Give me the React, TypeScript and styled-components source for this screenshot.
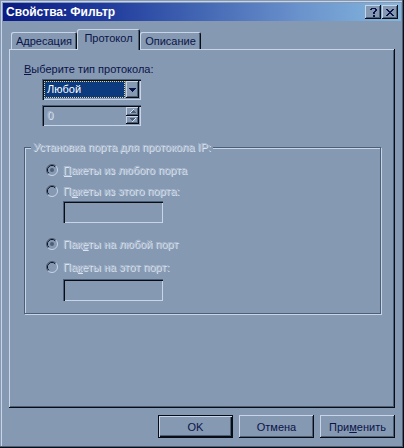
import React, { ReactElement } from "react";
import styled, { createGlobalStyle, css } from "styled-components";

const colors = {
  face: "#8599b3",
  hi: "#c8d5e8",
  shadow: "#4d5e77",
  dark: "#080c14",
  text: "#0b1448",
  dim: "#a9b7cb",
  dimHi: "#dbe4f0",
  select: "#0b3a7e",
};

const raised = css`
  box-shadow: inset -1px -1px 0 ${colors.dark}, inset 1px 1px 0 ${colors.hi},
    inset -2px -2px 0 ${colors.shadow};
`;

const sunken = css`
  box-shadow: inset 1px 1px 0 ${colors.shadow}, inset 2px 2px 0 ${colors.dark},
    inset -1px -1px 0 ${colors.hi};
`;

const GlobalStyle = createGlobalStyle`
  html, body {
    margin: 0;
    padding: 0;
    background: ${colors.face};
  }
  #root {
    width: 404px;
    height: 448px;
  }
`;

const Window = styled.div`
  width: 404px;
  height: 448px;
  box-sizing: border-box;
  padding: 3px;
  display: flex;
  flex-direction: column;
  background: ${colors.face};
  box-shadow: inset -1px -1px 0 ${colors.dark}, inset -2px -2px 0 ${colors.shadow},
    inset 1px 1px 0 ${colors.face}, inset 2px 2px 0 ${colors.hi};
  font-family: "Liberation Sans", Arial, sans-serif;
  font-size: 11px;
  color: ${colors.text};
`;

const TitleBar = styled.div`
  height: 18px;
  display: flex;
  align-items: center;
  padding: 0 3px 0 3px;
  background: linear-gradient(
    to right,
    #0b1c84 0%,
    #1f3a9c 25%,
    #4467b4 50%,
    #6b93cc 75%,
    #84b7df 100%
  );
`;

const Caption = styled.div`
  flex: 1;
  color: #ffffff;
  font-weight: bold;
  font-size: 12px;
  line-height: 18px;
  white-space: nowrap;
`;

const CaptionButtons = styled.div`
  display: flex;
  gap: 1px;
`;

const CaptionButton = styled.div`
  width: 16px;
  height: 14px;
  display: flex;
  align-items: center;
  justify-content: center;
  background: ${colors.face};
  ${raised};
`;

const Body = styled.div`
  display: flex;
  flex-direction: column;
  padding: 0 6px;
  margin-top: 8px;
`;

const TabStrip = styled.div`
  display: flex;
  align-items: flex-end;
  height: 20px;
  padding-left: 2px;
  position: relative;
  z-index: 1;
`;

const Tab = styled.div<{ $active?: boolean; $width: number }>`
  width: ${(p) => p.$width}px;
  height: ${(p) => (p.$active ? 21 : 17)}px;
  margin-bottom: ${(p) => (p.$active ? -1 : 0)}px;
  padding-bottom: ${(p) => (p.$active ? 3 : 0)}px;
  box-sizing: border-box;
  display: flex;
  align-items: center;
  justify-content: center;
  background: ${colors.face};
  border-radius: 2px 2px 0 0;
  box-shadow: inset 1px 1px 0 ${colors.hi}, inset -1px 0 0 ${colors.dark},
    inset -2px 0 0 ${colors.shadow};
  white-space: nowrap;
`;

const Panel = styled.div`
  height: 359px;
  box-sizing: border-box;
  padding: 13px 0 0 15px;
  display: flex;
  flex-direction: column;
  align-items: flex-start;
  ${raised};
`;

const FieldLabel = styled.div`
  line-height: 14px;
`;

const Combo = styled.div`
  width: 99px;
  height: 21px;
  margin: 3px 0 0 18px;
  padding: 2px;
  box-sizing: border-box;
  display: flex;
  ${sunken};
`;

const ComboValue = styled.div`
  flex: 1;
  margin: 0 1px 0 0;
  padding-left: 3px;
  line-height: 17px;
  color: #ffffff;
  background: ${colors.select};
  outline: 1px dotted #e8d27a;
  outline-offset: -1px;
`;

const ArrowButton = styled.div`
  width: 13px;
  display: flex;
  align-items: center;
  justify-content: center;
  ${raised};
`;

const Spinner = styled(Combo)`
  margin-top: 5px;
`;

const SpinField = styled.div`
  flex: 1;
  padding-left: 3px;
  line-height: 17px;
`;

const SpinButtons = styled.div`
  width: 13px;
  display: flex;
  flex-direction: column;
`;

const SpinButton = styled.div`
  flex: 1;
  display: flex;
  align-items: center;
  justify-content: center;
  ${raised};
`;

const Dim = styled.span`
  color: ${colors.dim};
  text-shadow: 1px 1px 0 ${colors.dimHi};
`;

const Group = styled.fieldset`
  width: 357px;
  margin: 14px 0 0 0;
  padding: 7px 0 12px 0;
  box-sizing: border-box;
  border: 1px solid ${colors.shadow};
  box-shadow: inset 1px 1px 0 ${colors.hi}, 1px 1px 0 ${colors.hi};
`;

const Legend = styled.legend`
  margin-left: 6px;
  padding: 0 2px;
  line-height: 14px;
  background: ${colors.face};
`;

const GroupBody = styled.div`
  display: flex;
  flex-direction: column;
  align-items: flex-start;
  padding-left: 21px;
`;

const RadioRow = styled.div<{ $top: number }>`
  height: 18px;
  margin-top: ${(p) => p.$top}px;
  display: flex;
  align-items: center;
  gap: 5px;
`;

const TextBox = styled.div<{ $top: number }>`
  width: 100px;
  height: 22px;
  margin: ${(p) => p.$top}px 0 0 17px;
  box-sizing: border-box;
  ${sunken};
`;

const Footer = styled.div`
  display: flex;
  justify-content: flex-end;
  gap: 6px;
  padding: 0 6px;
  margin-top: 7px;
`;

const PushButton = styled.div<{ $default?: boolean }>`
  width: 75px;
  height: 23px;
  box-sizing: border-box;
  display: flex;
  align-items: center;
  justify-content: center;
  ${(p) =>
    p.$default
      ? css`
          box-shadow: inset 0 0 0 1px ${colors.dark}, inset 2px 2px 0 ${colors.hi},
            inset -2px -2px 0 ${colors.dark}, inset -3px -3px 0 ${colors.shadow};
        `
      : raised};
`;

const HelpGlyph = () => (
  <svg width="7" height="9" viewBox="0 0 7 9" shapeRendering="crispEdges" fill={colors.text}>
    <rect x="1" y="0" width="5" height="1" />
    <rect x="0" y="1" width="2" height="1" />
    <rect x="5" y="1" width="2" height="2" />
    <rect x="4" y="3" width="2" height="1" />
    <rect x="3" y="4" width="2" height="2" />
    <rect x="3" y="7" width="2" height="2" />
  </svg>
);

const CloseGlyph = () => (
  <svg width="8" height="7" viewBox="0 0 8 7" shapeRendering="crispEdges">
    <path
      d="M0 0h2v1h1v1h2v-1h1v-1h2v1h-1v1h-1v1h-1v1h1v1h1v1h1v1h-2v-1h-1v-1h-2v1h-1v1h-2v-1h1v-1h1v-1h1v-1h-1v-1h-1v-1h-1z"
      fill={colors.text}
    />
  </svg>
);

const DownArrow = ({ color }: { color: string }) => (
  <svg width="7" height="4" viewBox="0 0 7 4" shapeRendering="crispEdges">
    <path d="M0 0h7v1h-1v1h-1v1h-1v1h-1v-1h-1v-1h-1v-1h-1z" fill={color} />
  </svg>
);

const DimArrow = ({ up }: { up?: boolean }) => (
  <svg
    width="6"
    height="4"
    viewBox="0 0 6 4"
    shapeRendering="crispEdges"
    style={{ transform: up ? "rotate(180deg)" : undefined }}
  >
    <path d="M0 0h5v1h-1v1h-1v1h-1v-1h-1v-1h-1z" fill={colors.shadow} />
    <path d="M5 0h1v1h-1v1h-1v1h-1v1h-1v-1h1v-1h1v-1h1z" fill={colors.dimHi} />
  </svg>
);

const Radio = ({ checked }: { checked?: boolean }) => (
  <svg width="12" height="12" viewBox="0 0 12 12">
    <path d="M2.1 9.9A5.5 5.5 0 0 1 9.9 2.1" stroke={colors.shadow} fill="none" />
    <path d="M9.9 2.1A5.5 5.5 0 0 1 2.1 9.9" stroke={colors.hi} fill="none" />
    <path d="M2.8 9.2A4.5 4.5 0 0 1 9.2 2.8" stroke={colors.dark} fill="none" />
    <circle cx="6" cy="6" r="3.8" fill={colors.face} />
    {checked && <circle cx="6" cy="6" r="2" fill={colors.shadow} />}
  </svg>
);

const tabs = [
  { label: "Адресация", width: 66 },
  { label: "Протокол", width: 63, active: true },
  { label: "Описание", width: 61 },
];

const App = (): ReactElement => (
  <>
    <GlobalStyle />
    <Window>
      <TitleBar>
        <Caption>Свойства: Фильтр</Caption>
        <CaptionButtons>
          <CaptionButton>
            <HelpGlyph />
          </CaptionButton>
          <CaptionButton>
            <CloseGlyph />
          </CaptionButton>
        </CaptionButtons>
      </TitleBar>
      <Body>
        <TabStrip>
          {tabs.map((tab) => (
            <Tab key={tab.label} $active={tab.active} $width={tab.width}>
              {tab.label}
            </Tab>
          ))}
        </TabStrip>
        <Panel>
          <FieldLabel>
            <u>В</u>ыберите тип протокола:
          </FieldLabel>
          <Combo>
            <ComboValue>Любой</ComboValue>
            <ArrowButton>
              <DownArrow color={colors.text} />
            </ArrowButton>
          </Combo>
          <Spinner>
            <SpinField>
              <Dim>0</Dim>
            </SpinField>
            <SpinButtons>
              <SpinButton>
                <DimArrow up />
              </SpinButton>
              <SpinButton>
                <DimArrow />
              </SpinButton>
            </SpinButtons>
          </Spinner>
          <Group>
            <Legend>
              <Dim>Установка порта для протокола IP:</Dim>
            </Legend>
            <GroupBody>
              <RadioRow $top={0}>
                <Radio checked />
                <Dim>
                  <u>П</u>акеты из любого порта
                </Dim>
              </RadioRow>
              <RadioRow $top={3}>
                <Radio />
                <Dim>
                  П<u>а</u>кеты из этого порта:
                </Dim>
              </RadioRow>
              <TextBox $top={1} />
              <RadioRow $top={12}>
                <Radio checked />
                <Dim>
                  Пак<u>е</u>ты на любой порт
                </Dim>
              </RadioRow>
              <RadioRow $top={5}>
                <Radio />
                <Dim>
                  Па<u>к</u>еты на этот порт:
                </Dim>
              </RadioRow>
              <TextBox $top={3} />
            </GroupBody>
          </Group>
        </Panel>
      </Body>
      <Footer>
        <PushButton $default>OK</PushButton>
        <PushButton>Отмена</PushButton>
        <PushButton>
          <span>
            При<u>м</u>енить
          </span>
        </PushButton>
      </Footer>
    </Window>
  </>
);

export default App;
